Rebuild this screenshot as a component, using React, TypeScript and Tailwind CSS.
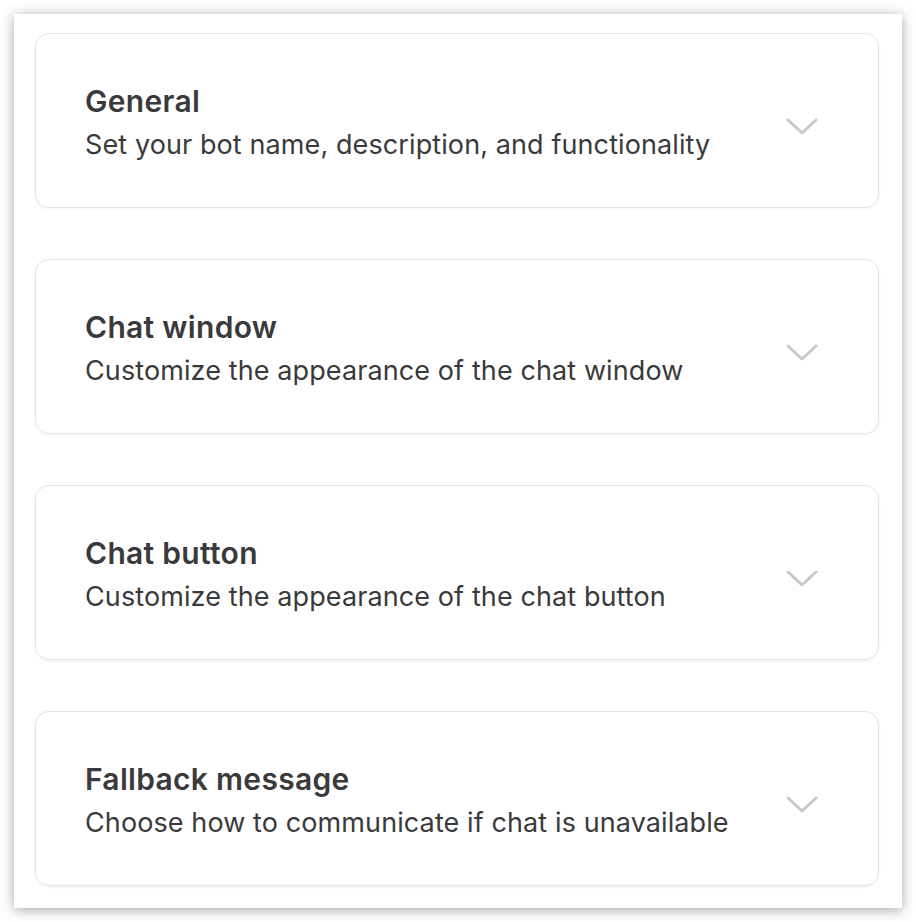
import React from "react";

const sections = [
  { title: "General", desc: "Set your bot name, description, and functionality" },
  { title: "Chat window", desc: "Customize the appearance of the chat window" },
  { title: "Chat button", desc: "Customize the appearance of the chat button" },
  { title: "Fallback message", desc: "Choose how to communicate if chat is unavailable" },
];

function Chevron() {
  return (
    <svg width="32" height="20" viewBox="0 0 32 20" fill="none" className="shrink-0">
      <path d="M2 3 L16 16 L30 3" stroke="#c7c7cc" strokeWidth="3" strokeLinecap="round" strokeLinejoin="round" />
    </svg>
  );
}

export default function App() {
  return (
    <div className="w-[916px] h-[922px] bg-white p-[14px]" style={{ fontFamily: "Inter, 'Noto Sans', sans-serif" }}>
      <div className="w-[888px] h-[894px] bg-white shadow-[0_2px_12px_rgba(0,0,0,0.35)] pl-[21px] pr-[23px] pt-[19px] flex flex-col gap-[51px]">
        {sections.map((s) => (
          <div
            key={s.title}
            className="h-[175px] rounded-[14px] border border-[#e3e3e8] shadow-[0_1px_3px_rgba(0,0,0,0.06)] pl-[49px] pr-[60px] flex items-center justify-between"
          >
            <div className="flex flex-col pt-[5px]">
              <div className="text-[30px] leading-[36px] font-semibold tracking-[0.3px] text-[#3a3a3c]">{s.title}</div>
              <div className="text-[27px] leading-[36px] mt-[8px] tracking-[0.1px] text-[#3a3a3c]">{s.desc}</div>
            </div>
            <div className="pt-[13px]">
              <Chevron />
            </div>
          </div>
        ))}
      </div>
    </div>
  );
}
